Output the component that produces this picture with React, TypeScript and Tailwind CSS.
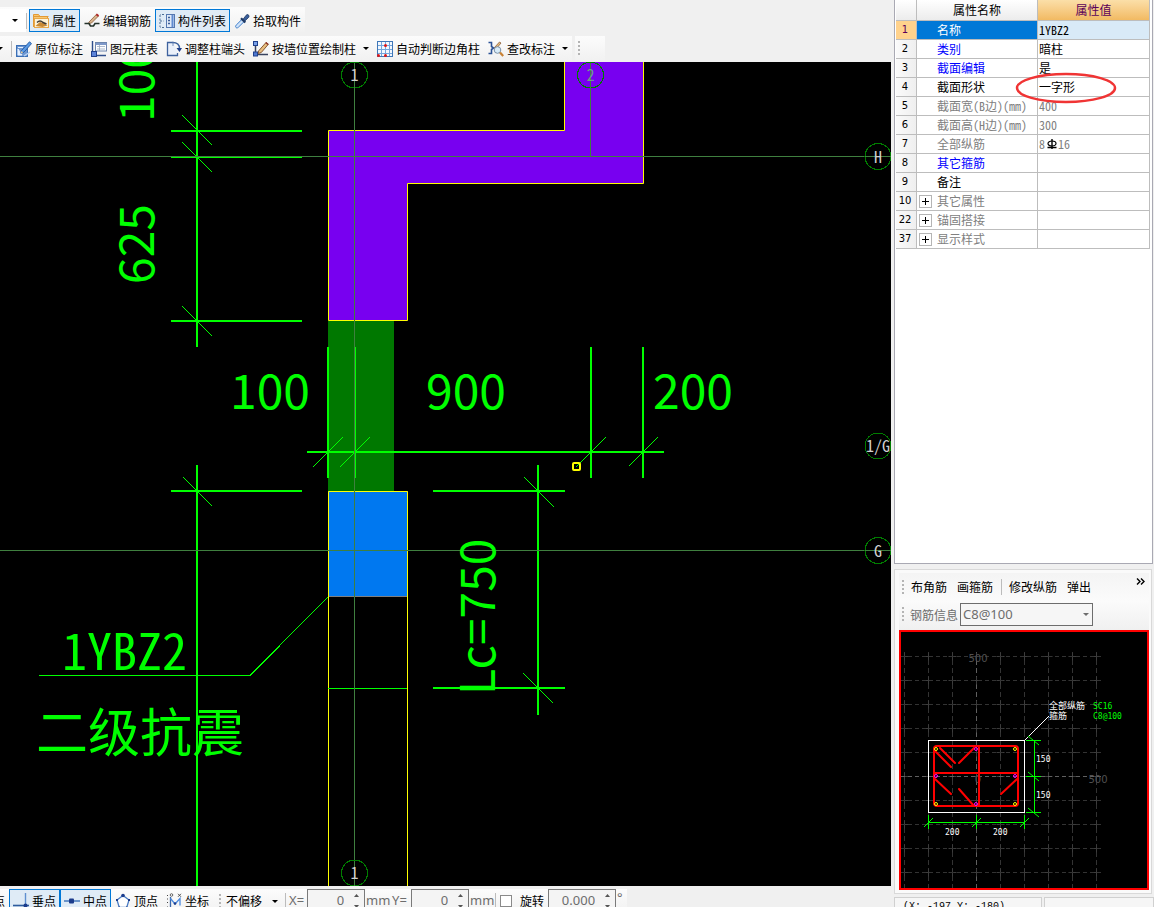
import type { ReactNode } from "react";

/* ---------- Toolbar icons ---------- */

function Icon({ children }: { children: ReactNode }) {
  return (
    <svg width="16" height="16" viewBox="0 0 16 16" fill="none" className="shrink-0" aria-hidden="true">
      {children}
    </svg>
  );
}

const PropertyIcon = () => (
  <Icon>
    <path d="M.5 14V1.500h5l1.500 2h7.500V6" fill="#f7c873" stroke="#e39a35" />
    <path d="M.5 3.500h15" stroke="#e39a35" />
    <rect x="1.500" y="5.500" width="14" height="9" fill="#fdf3d8" stroke="#e8a84a" />
    <path d="M2.500 13 7 9l3 1 4.500 2.500-5 1.500z" fill="#c98a35" />
    <path d="M4 9.500c2-2 4-2 6 0l3.500 1.500" stroke="#3f3a33" strokeWidth="1.500" />
  </Icon>
);

const PencilBarIcon = () => (
  <Icon>
    <path d="m5 9 7.500-7.700 2 1.700L7.500 10l-3 .7z" fill="#d8b48c" stroke="#8b5e3c" strokeWidth=".8" />
    <path d="m12.300 1.300 2.200 1.700" stroke="#b0282a" strokeWidth="2" />
    <path d="M.5 10.500H5l1.500 2.500h3L11 10.500h4.500" stroke="#26332a" strokeWidth="1.600" />
  </Icon>
);

const ListIcon = () => (
  <Icon>
    <path d="M1 2v12M5 1.500H1M5 14.500H1M1 8h4" stroke="#4a6d94" strokeDasharray="2 1.500" />
    <rect x="7.500" y="1.500" width="8" height="13" fill="#dfeaf8" stroke="#5578b0" />
    <path d="M13.500 2v12" stroke="#5f8bd0" strokeWidth="2" />
    <path d="M9 4.500h2M9 7.500h2M9 10.500h2" stroke="#3c5f98" strokeWidth="1.500" />
  </Icon>
);

const DropperIcon = () => (
  <Icon>
    <path d="M2 14.500c-.8-.8-.4-1.800.2-2.400L8 6.300 10.200 8.500l-5.900 5.800c-.6.600-1.600.9-2.300.2z" fill="#cfe3fa" stroke="#3f7ecb" />
    <path d="m7 5.200 4.300 4.300" stroke="#1e3a66" strokeWidth="2.200" />
    <path d="m9.300 6 2.900-3.800c1-1.300 2.900-.5 2.800 1.100 0 .7-.3 1.100-.9 1.600L10.800 8z" fill="#3a5f9c" stroke="#1b355f" strokeWidth=".8" />
  </Icon>
);

const OriginNoteIcon = () => (
  <Icon>
    <rect x=".5" y="4.500" width="11" height="11" fill="#6d97d2" stroke="#3b6fb5" />
    <path d="M2 14V8l4 6zM2 6.500h5" fill="#e7f1ff" stroke="#e7f1ff" />
    <path d="M5.500 9.500 13.500.8l2 1.800-7.500 8.600-3.300 1z" fill="#5a9be6" stroke="#24589f" strokeWidth=".9" />
    <path d="m4.800 12.300.7-2.300 1.700 1.400z" fill="#f3d29c" />
    <path d="M8 15l6-4" stroke="#b9d3f3" strokeWidth="1.500" />
  </Icon>
);

const ColumnTableIcon = () => (
  <Icon>
    <path d="M1.500 0v15M1 14.500h14" stroke="#304f8c" strokeWidth="1.400" />
    <rect x="4.500" y="1.500" width="11" height="8.500" fill="#fff" stroke="#6f86ad" />
    <path d="M4.500 3h11" stroke="#7f99c9" strokeWidth="2" />
    <path d="M6 5.500h8M6 8h8M8.500 4v6" stroke="#9ba9c2" strokeWidth=".8" />
    <rect x=".5" y="10.500" width="5" height="5" fill="#5c83d8" stroke="#20408c" />
  </Icon>
);

const AdjustEndIcon = () => (
  <Icon>
    <path d="M7.500 1.500h-6v13h10V12" fill="#eaf0fa" stroke="#3e629e" strokeWidth="1.300" />
    <path d="M6.500 1.500c4.500 0 7 2.500 7 6" stroke="#3e629e" strokeWidth="1.400" />
    <path d="m10.500 7 3 4 2.500-4z" fill="#20408c" />
    <path d="M7 1.500V5" stroke="#7a94bf" />
  </Icon>
);

const WallColumnIcon = () => (
  <Icon>
    <path d="M2.500 1v14M2 13.500h13" stroke="#38435f" strokeWidth="1.500" />
    <rect x=".5" y=".5" width="4" height="4" fill="#78a0e8" stroke="#20408c" />
    <rect x=".5" y="11" width="4" height="4" fill="#4f78d0" stroke="#20408c" />
    <path d="m5.500 10 7.500-8.500 2.300 1.800-7 8.200-3 1z" fill="#e6bd7e" stroke="#7d4b25" strokeWidth=".9" />
    <path d="m12.700 1.500 2.500 2" stroke="#8f3326" strokeWidth="1.600" />
  </Icon>
);

const GridColumnIcon = () => (
  <Icon>
    <rect x=".5" y=".5" width="15" height="15" fill="#f2f8ff" stroke="#3f77b8" />
    <path d="M4.500 1v14M8.500 1v14M12.500 1v14M1 4.500h14M1 8.500h14M1 12.500h14" stroke="#74a6dc" />
    <circle cx="8.500" cy="4.500" r="1.500" fill="#e01616" />
    <circle cx="1.500" cy="14.500" r="1.500" fill="#e01616" />
    <circle cx="8.500" cy="14.500" r="1.500" fill="#e01616" />
  </Icon>
);

const CheckNoteIcon = () => (
  <Icon>
    <path d="M.5 1.500h3v4l2 1.500-2 1.500v4h-3" stroke="#2b5296" strokeWidth="1.600" />
    <path d="m6 7 5.500-6 1.500 1-5 6z" fill="#e6bd7e" stroke="#7d4b25" strokeWidth=".7" />
    <circle cx="9.500" cy="9" r="3.300" fill="#d9ecf8" stroke="#7890a8" />
    <path d="m12 11.500 3.200 3.500" stroke="#c98235" strokeWidth="2.200" />
  </Icon>
);

const PerpIcon = () => (
  <Icon>
    <path d="M0 12.500h16" stroke="#2e5c9e" strokeWidth="1.600" />
    <path d="M12.500 0v12" stroke="#5f8fd0" strokeWidth="1.400" />
    <circle cx="12.500" cy="12.500" r="2" fill="#1c3c8c" />
  </Icon>
);

const MidIcon = () => (
  <Icon>
    <path d="M0 8h16" stroke="#4d7fc0" strokeWidth="1.600" />
    <rect x="5" y="5.500" width="5" height="5" rx="1" fill="#1c3c8c" />
  </Icon>
);

const VertexIcon = () => (
  <Icon>
    <path d="M8 2.500 14 7l-2.300 7.500H4.300L2 7z" fill="#fff" stroke="#4b7cc4" strokeWidth="1.300" />
    <circle cx="8" cy="2.500" r="1.800" fill="#1c3c8c" />
    <path d="M1 7h2M13 7h2M3.500 14.500h1.500M11 14.500h1.500" stroke="#1c3c8c" strokeWidth="2" />
  </Icon>
);

const CoordIcon = () => (
  <Icon>
    <path d="M4.500 4v11h11" stroke="#3a68ad" strokeWidth="1.300" />
    <path d="M4.500 5.500 9 11l5-5.500v7" stroke="#4b8ae0" strokeWidth="1.300" />
    <path d="M1 2.500h2M1 6h2M1 9.500h2M1 14h2" stroke="#444" strokeDasharray="1 1" />
    <circle cx="5.500" cy="2" r="1.300" stroke="#444" strokeWidth=".8" />
    <path d="m12 .8 3 3M15 .8l-3 3" stroke="#444" strokeWidth=".9" />
    <circle cx="9" cy="10.500" r="1.300" fill="#1c3c8c" />
  </Icon>
);

/* ---------- Shared controls ---------- */

function Caret() {
  return (
    <svg width="6" height="3" viewBox="0 0 6 3" aria-hidden="true" className="shrink-0">
      <path d="M0 0h6L3 3z" fill="currentColor" />
    </svg>
  );
}

function ToolButton({
  icon,
  label,
  pressed = false,
  menu = false,
}: {
  icon: ReactNode;
  label: string;
  pressed?: boolean;
  menu?: boolean;
}) {
  return (
    <button
      type="button"
      aria-pressed={pressed}
      className={
        pressed
          ? "flex h-full shrink-0 items-center gap-[3px] border border-[#0078d7] bg-[#dfebf6] px-[3px]"
          : "flex h-full shrink-0 items-center gap-[3px] border border-transparent px-[3px]"
      }
    >
      {icon}
      <span className="whitespace-nowrap">{label}</span>
      {menu && (
        <span className="flex w-[10px] justify-end">
          <Caret />
        </span>
      )}
    </button>
  );
}

function Grip() {
  return (
    <svg width="2" height="15" viewBox="0 0 2 15" className="shrink-0" aria-hidden="true">
      <path d="M1 0v15" stroke="#b4b4b4" strokeWidth="2" strokeDasharray="2 2" />
    </svg>
  );
}

const Separator = () => <span className="h-4 w-px shrink-0 bg-[#bcbcbc]" />;

function Spinner({ id, value, wide = false }: { id: string; value: string; wide?: boolean }) {
  return (
    <span
      className={
        wide
          ? "flex h-full w-[68px] shrink-0 border border-[#7a7a7a] bg-[#f4f4f4]"
          : "flex h-full w-[58px] shrink-0 border border-[#7a7a7a] bg-[#f4f4f4]"
      }
    >
      <input id={id} defaultValue={value} className="min-w-0 flex-1 bg-transparent pr-1 text-right outline-none" />
      <span className="flex w-4 flex-col items-center justify-between py-1">
        <svg width="5" height="3" viewBox="0 0 5 3" aria-hidden="true">
          <path d="M0 3h5L2.500 0z" fill="#555" />
        </svg>
        <svg width="5" height="3" viewBox="0 0 5 3" aria-hidden="true">
          <path d="M0 0h5L2.500 3z" fill="#555" />
        </svg>
      </span>
    </span>
  );
}

/* ---------- Top toolbars ---------- */

const band = "flex h-[25px] items-center bg-linear-to-b from-[#fcfcfc] to-[#f1f1f1]";

function Toolbars() {
  return (
    <header className="flex flex-col gap-1 bg-[#f0f0f0] pt-[7px] pb-px">
      <div className={band + " w-fit pt-[2px]"}>
        <button type="button" aria-label="展开" className="flex h-full w-[26px] items-center justify-center bg-white pl-1">
          <Caret />
        </button>
        <Separator />
        <span className="w-[2px]" />
        <ToolButton icon={<PropertyIcon />} label="属性" pressed />
        <ToolButton icon={<PencilBarIcon />} label="编辑钢筋" />
        <ToolButton icon={<ListIcon />} label="构件列表" pressed />
        <ToolButton icon={<DropperIcon />} label="拾取构件" />
      </div>
      <div className="flex gap-[3px]">
        <div className={band + " w-fit"}>
          <button type="button" aria-label="更多" className="flex h-full w-[11px] items-center justify-start overflow-hidden">
            <svg width="3" height="3" viewBox="0 0 3 3" aria-hidden="true">
              <path d="M0 0h3L0 3z" fill="#000" />
            </svg>
          </button>
          <Separator />
          <ToolButton icon={<OriginNoteIcon />} label="原位标注" />
          <ToolButton icon={<ColumnTableIcon />} label="图元柱表" />
          <ToolButton icon={<AdjustEndIcon />} label="调整柱端头" />
          <ToolButton icon={<WallColumnIcon />} label="按墙位置绘制柱" menu />
          <ToolButton icon={<GridColumnIcon />} label="自动判断边角柱" />
          <ToolButton icon={<CheckNoteIcon />} label="查改标注" menu />
        </div>
        <div className={band + " w-[30px] pl-[3px]"}>
          <Grip />
        </div>
      </div>
    </header>
  );
}

/* ---------- Plan drawing ---------- */

const mono = "'Noto Sans Mono CJK SC', 'Noto Sans CJK SC', sans-serif";

function Bubble({ x, y, label, color = "#d0d0d0" }: { x: number; y: number; label: string; color?: string }) {
  return (
    <g>
      <circle cx={x} cy={y} r="13" fill="none" stroke="#007c00" shapeRendering="crispEdges" />
      <text x={x} y={y + 6} fontSize="16" textAnchor="middle" fill={color} fontFamily={mono}>
        {label}
      </text>
    </g>
  );
}

function PlanCanvas() {
  return (
    <main className="min-h-0 flex-1 bg-black">
      <svg viewBox="0 62 891 824" preserveAspectRatio="xMinYMin meet" className="block h-full w-full" fill="none">
        <path d="M564.500 60V130.500H328.500V320.500H407.500V183.500H643.500V60z" fill="#7800f0" stroke="#ff0" />
        <rect x="328" y="321" width="66" height="170" fill="#007800" />
        <rect x="328" y="491" width="80" height="106" fill="#0078f0" />
        <path d="M328.500 886V491.500H407.500V886" stroke="#ff0" />
        <path d="M329 596.500H407" stroke="#808080" />
        <path d="M328 688.500H407" stroke="#0f0" />

        {/* Dimension lines */}
        <g stroke="#0f0" strokeWidth="2">
          <path d="M197 62V347M197 465V886M171 131H302M171 157H302M171 321H302M171 491H302" />
          <path d="M307 452H664M328 347V478M355 347V478M591 347V478M643 347V478" />
          <path d="M538 465V715M433 491H565M433 688H565" />
        </g>
        <g stroke="#0f0" strokeWidth="1" shapeRendering="crispEdges">
          <path d="M182 115l30 30M182 142l30 30M182 306l30 30M183 477l29 29" />
          <path d="M313 467l30-30M340 467l30-30M576 467l30-30M629 466l29-29" />
          <path d="M524 477l30 30M523 673l30 30" />
          <path d="M39 675.500H250L328 597" />
        </g>

        {/* Axis lines */}
        <g stroke="#3f7f3f">
          <path d="M0 156.500H891M0 550.500H891M354.500 62V886M590.500 62V156" />
        </g>

        <rect x="573" y="463" width="7" height="7" rx="1" stroke="#ff0" strokeWidth="2" />

        <g fill="#0f0" fontSize="48" fontFamily="'Noto Sans CJK SC', sans-serif">
          <text x="230" y="409">100</text>
          <text x="426" y="409">900</text>
          <text x="653" y="409">200</text>
          <text transform="translate(154 284) rotate(-90)">625</text>
          <text transform="translate(154 122) rotate(-90)">100</text>
          <text transform="translate(495 695) rotate(-90)">Lc=750</text>
          <text x="62" y="670" fontSize="50" fontFamily={mono}>1YBZ2</text>
          <text x="36" y="752" fontSize="52">二级抗震</text>
        </g>

        <Bubble x={354.5} y={75} label="1" />
        <Bubble x={590.5} y={75} label="2" color="#6f9a8c" />
        <Bubble x={878} y={156.5} label="H" />
        <Bubble x={878} y={446} label="1/G" />
        <Bubble x={878} y={550.5} label="G" />
        <Bubble x={354.5} y={873} label="1" />
      </svg>
    </main>
  );
}

/* ---------- Bottom bar ---------- */

function StatusBar() {
  return (
    <footer className="h-[21px] shrink-0 overflow-hidden bg-[#f0f0f0] pt-[3px]">
      <div className="flex h-6 w-fit items-center bg-linear-to-b from-[#fcfcfc] to-[#f1f1f1] pr-1">
        <span className="flex w-[9px] justify-end overflow-hidden pr-1">点</span>
        <ToolButton icon={<PerpIcon />} label="垂点" pressed />
        <ToolButton icon={<MidIcon />} label="中点" pressed />
        <ToolButton icon={<VertexIcon />} label="顶点" />
        <ToolButton icon={<CoordIcon />} label="坐标" />
        <span className="flex w-[9px] shrink-0 justify-center pl-1">
          <Grip />
        </span>
        <span className="relative flex items-center text-black">
          <select aria-label="偏移方式" className="w-[58px] appearance-none bg-transparent pl-1 outline-none">
            <option>不偏移</option>
          </select>
          <span className="pointer-events-none absolute right-[2px]">
            <Caret />
          </span>
        </span>
        <span className="w-[5px]" />
        <Separator />
        <div className="flex h-full items-center pl-[3px] font-['Noto_Sans'] text-[13px] text-[#6d6d6d]">
          <label htmlFor="offset-x" className="w-[18px]">X=</label>
          <Spinner id="offset-x" value="0" />
          <span className="w-[27px] pl-px">mm</span>
          <label htmlFor="offset-y" className="w-[19px]">Y=</label>
          <Spinner id="offset-y" value="0" />
          <span className="w-[26px] pl-px">mm</span>
        </div>
        <Separator />
        <label className="flex items-center gap-2 px-1">
          <input type="checkbox" className="size-3 appearance-none border border-[#8a8a8a] bg-white" />
          旋转
        </label>
        <div className="flex h-full font-['Noto_Sans'] text-[13px] text-[#6d6d6d]">
          <label htmlFor="angle" className="sr-only">旋转角度</label>
          <Spinner id="angle" value="0.000" wide />
          <span className="pl-px">°</span>
        </div>
      </div>
    </footer>
  );
}

/* ---------- Property grid ---------- */

type Row = { no: number; name: string; value?: ReactNode; tone: "blue" | "black" | "gray"; group?: boolean; marked?: boolean };

const rows: Row[] = [
  { no: 1, name: "名称", value: "1YBZ2", tone: "black" },
  { no: 2, name: "类别", value: "暗柱", tone: "blue" },
  { no: 3, name: "截面编辑", value: "是", tone: "blue" },
  { no: 4, name: "截面形状", value: "一字形", tone: "black", marked: true },
  { no: 5, name: "截面宽(B边)(mm)", value: "400", tone: "gray" },
  { no: 6, name: "截面高(H边)(mm)", value: "300", tone: "gray" },
  {
    no: 7,
    name: "全部纵筋",
    value: (
      <span className="flex items-center">
        8
        <svg width="12" height="10" viewBox="0 0 12 10" fill="none" className="ml-px text-black" aria-label="C">
          <path d="M6 0v10M1.500 8.500h9" stroke="currentColor" strokeWidth="1.400" />
          <ellipse cx="6" cy="4.500" rx="4" ry="2.500" stroke="currentColor" strokeWidth="1.200" />
        </svg>
        16
      </span>
    ),
    tone: "gray",
  },
  { no: 8, name: "其它箍筋", tone: "blue" },
  { no: 9, name: "备注", tone: "black" },
  { no: 10, name: "其它属性", tone: "gray", group: true },
  { no: 22, name: "锚固搭接", tone: "gray", group: true },
  { no: 37, name: "显示样式", tone: "gray", group: true },
];

const tones = { blue: "text-[#0000ff]", black: "text-black", gray: "text-[#808080]" };

function PropertyGrid() {
  return (
    <section className="min-h-0 flex-1 border-r border-b border-l border-[#a9a9b3] bg-white pr-[2px] pl-px font-['Noto_Sans_Mono_CJK_SC','Noto_Sans_CJK_SC',sans-serif]">
      <table className="w-full table-fixed border-separate border-spacing-0 leading-[18px]">
        <colgroup>
          <col className="w-[21px]" />
          <col className="w-[121px]" />
          <col />
        </colgroup>
        <thead>
          <tr className="h-[21px]">
            <th className="border-r border-b border-[#bdbdbd] bg-linear-to-b from-white to-[#ececec] p-0" aria-label="序号" />
            <th className="border-r border-b border-[#bdbdbd] bg-linear-to-b from-white to-[#ececec] p-0 font-normal">属性名称</th>
            <th className="border-r border-b border-[#bdbdbd] bg-linear-to-b from-[#fbdfa8] to-[#f2ba62] p-0 font-normal text-[#5a005a]">
              属性值
            </th>
          </tr>
        </thead>
        <tbody>
          {rows.map((r) => {
            const selected = r.no === 1;
            return (
              <tr key={r.no} className="h-[19px]">
                <td
                  className={
                    selected
                      ? "border-r border-b border-[#bdbdbd] bg-[#ffd28c] p-0 pr-[2px] text-center font-['DejaVu_Sans'] text-[10px] text-[#5a005a]"
                      : "border-r border-b border-[#bdbdbd] bg-linear-to-r from-[#fafafa] to-[#efefef] p-0 pr-[2px] text-center font-['DejaVu_Sans'] text-[10px]"
                  }
                >
                  {r.no}
                </td>
                <td className={(selected ? "bg-[#0078d7] text-white" : tones[r.tone]) + " border-r border-b border-[#bdbdbd] p-0"}>
                  <div className="flex h-[18px] items-center whitespace-nowrap">
                    <span className="flex w-5 shrink-0 items-center pl-[2px]">
                      {r.group && (
                        <button
                          type="button"
                          aria-label={"展开" + r.name}
                          className="flex size-[13px] items-center justify-center border border-[#b5b5b5] bg-white text-black"
                        >
                          <svg width="7" height="7" viewBox="0 0 7 7" aria-hidden="true">
                            <path d="M0 3.500h7M3.500 0v7" stroke="currentColor" />
                          </svg>
                        </button>
                      )}
                    </span>
                    {r.name}
                  </div>
                </td>
                <td
                  className={
                    (selected ? "bg-[#d9eaf7] " : "") +
                    (r.tone === "gray" ? "text-[#808080]" : "text-black") +
                    " relative border-r border-b border-[#bdbdbd] p-0 pl-px"
                  }
                >
                  {r.value}
                  {r.marked && (
                    <svg
                      width="102"
                      height="32"
                      viewBox="0 0 102 32"
                      fill="none"
                      aria-hidden="true"
                      className="pointer-events-none absolute -top-[6px] -left-[23px] z-10"
                    >
                      <ellipse cx="51" cy="16" rx="49" ry="14" stroke="#f03434" strokeWidth="2.500" />
                    </svg>
                  )}
                </td>
              </tr>
            );
          })}
        </tbody>
      </table>
    </section>
  );
}

/* ---------- Section view ---------- */

const gridX = [904.5, 928.5, 952.5, 976.5, 1000.5, 1024.5, 1048.5, 1072.5, 1096.5];
const gridY = [656.5, 680.5, 704.5, 728.5, 752.5, 776.5, 800.5, 824.5, 848.5, 872.5];

function SectionCanvas() {
  return (
    <div className="min-h-0 flex-1 border-2 border-[#f00] bg-black">
      <svg viewBox="901 632 245 256" preserveAspectRatio="xMinYMin meet" className="block h-full w-full" fill="none">
        {gridX.map((x) => (
          <g key={x}>
            <path d={`M${x} 652V888`} stroke={x === 976.5 ? "#606060" : "#333"} strokeDasharray="5 3" />
            {gridY.map((y) => (
              <path key={y} d={`M${x - 4} ${y}h8M${x} ${y - 4}v8`} stroke="#3c3c3c" />
            ))}
          </g>
        ))}
        {gridY.map((y) => (
          <path key={y} d={`M901 ${y}H1101`} stroke={y === 776.5 ? "#606060" : "#333"} strokeDasharray="4 3" />
        ))}
        <g fill="#505050" fontSize="10" fontFamily="'DejaVu Sans', sans-serif" textAnchor="middle">
          <text x="978" y="662">500</text>
          <text x="1098" y="783">500</text>
          <text x="978" y="783">0</text>
        </g>

        <rect x="928.500" y="740.500" width="96" height="72" stroke="#fff" />
        <path d="M1024.500 740.500 1049 716" stroke="#fff" />

        <g stroke="#f00" strokeWidth="2" strokeLinecap="round">
          <rect x="934" y="746" width="84" height="60" rx="3" />
          <path d="M979 747V806M934 773H1018" />
          <path d="M935 751l16 16M940 748l15 15M974 748l-15 15M935 779l16 15M959 789l15 17M1017 779l-16 15" />
        </g>
        <g stroke="#ff0">
          <circle cx="936" cy="749" r="1.500" />
          <circle cx="1015" cy="749" r="1.500" />
          <circle cx="936" cy="804" r="1.500" />
          <circle cx="1015" cy="804" r="1.500" />
        </g>
        <g stroke="#f0f">
          <circle cx="976" cy="749" r="1.500" />
          <circle cx="976" cy="804" r="1.500" />
          <circle cx="936" cy="776" r="1.500" />
          <circle cx="1015" cy="776" r="1.500" />
        </g>

        <g stroke="#0f0">
          <path d="M1034.500 740V813M1026 740.500h15M1026 776.500h15M1026 812.500h15" />
          <path d="M1028 736l11 9M1028 772l11 9M1028 808l11 9" />
          <path d="M928 822.500H1025M928.500 815v14M976.500 815v14M1024.500 815v14" />
          <path d="M924 827l9-9M972 827l9-9M1020 827l9-9" />
        </g>

        <g fill="#fff" fontSize="8" fontFamily="'DejaVu Sans Mono', monospace">
          <text x="1036" y="762">150</text>
          <text x="1036" y="798">150</text>
          <text x="945" y="835">200</text>
          <text x="993" y="835">200</text>
        </g>
        <g fill="#fff" fontSize="9" fontFamily="'Noto Sans CJK SC', sans-serif">
          <text x="1049" y="709">全部纵筋</text>
          <text x="1049" y="719">箍筋</text>
        </g>
        <g fill="#0f0" fontSize="8" fontFamily="'DejaVu Sans Mono', monospace">
          <text x="1093" y="709">SC16</text>
          <text x="1093" y="719">C8@100</text>
        </g>
      </svg>
    </div>
  );
}

function SectionPanel() {
  return (
    <section className="flex h-[325px] shrink-0 flex-col border border-[#d9d9d9] bg-[#fafafa] py-[3px] pr-[2px] pl-1">
      <div className="flex h-7 shrink-0 items-center bg-linear-to-b from-[#f4f4f4] to-[#fbfbfb] pl-[3px]">
        <Grip />
        <button type="button" className="ml-[7px]">布角筋</button>
        <button type="button" className="mr-2 ml-[10px]">画箍筋</button>
        <Separator />
        <button type="button" className="ml-[7px]">修改纵筋</button>
        <button type="button" className="ml-[10px]">弹出</button>
        <button type="button" aria-label="更多工具" className="mr-1 mb-3 ml-auto">
          <svg width="9" height="7" viewBox="0 0 9 7" fill="none" aria-hidden="true">
            <path d="m1 .5 3 3-3 3M5 .5l3 3-3 3" stroke="#000" strokeWidth="1.400" />
          </svg>
        </button>
      </div>
      <div className="flex h-[29px] shrink-0 items-start bg-linear-to-b from-[#fbfbfb] to-[#f0f0f0] pt-[2px] pl-[3px] text-[#6d6d6d]">
        <span className="flex h-[23px] items-center">
          <Grip />
          <label htmlFor="rebar" className="mr-[2px] ml-[6px]">钢筋信息</label>
          <span className="relative flex items-center">
            <select
              id="rebar"
              className="h-[23px] w-[133px] appearance-none border border-[#6d6d6d] bg-[#f6f6f6] pl-[2px] font-['Noto_Sans'] text-[13px] outline-none"
            >
              <option>C8@100</option>
            </select>
            <span className="pointer-events-none absolute right-1">
              <Caret />
            </span>
          </span>
        </span>
      </div>
      <SectionCanvas />
    </section>
  );
}

/* ---------- Window ---------- */

export default function App() {
  return (
    <div className="flex h-screen overflow-hidden bg-[#f0f0f0] font-['Noto_Sans_CJK_SC',sans-serif] text-xs text-black">
      <div className="flex min-w-0 flex-1 flex-col">
        <Toolbars />
        <PlanCanvas />
        <StatusBar />
      </div>
      <aside className="flex w-[263px] shrink-0 flex-col pl-[3px]">
        <div className="flex min-h-0 flex-1 pr-px">
          <PropertyGrid />
        </div>
        <div className="flex flex-col pt-[5px] pr-[2px] pb-[3px]">
          <SectionPanel />
        </div>
        <div className="flex h-[10px] shrink-0 gap-[2px] overflow-hidden">
          <div className="h-5 w-[148px] border border-[#d0d0d0] bg-[#f6f6f6] pl-2 font-['Liberation_Mono',monospace] text-[10px] leading-[18px] whitespace-pre">
            (X: -197 Y: -180)
          </div>
          <div className="h-5 flex-1 border border-[#d0d0d0] bg-[#f6f6f6]" />
        </div>
      </aside>
    </div>
  );
}
